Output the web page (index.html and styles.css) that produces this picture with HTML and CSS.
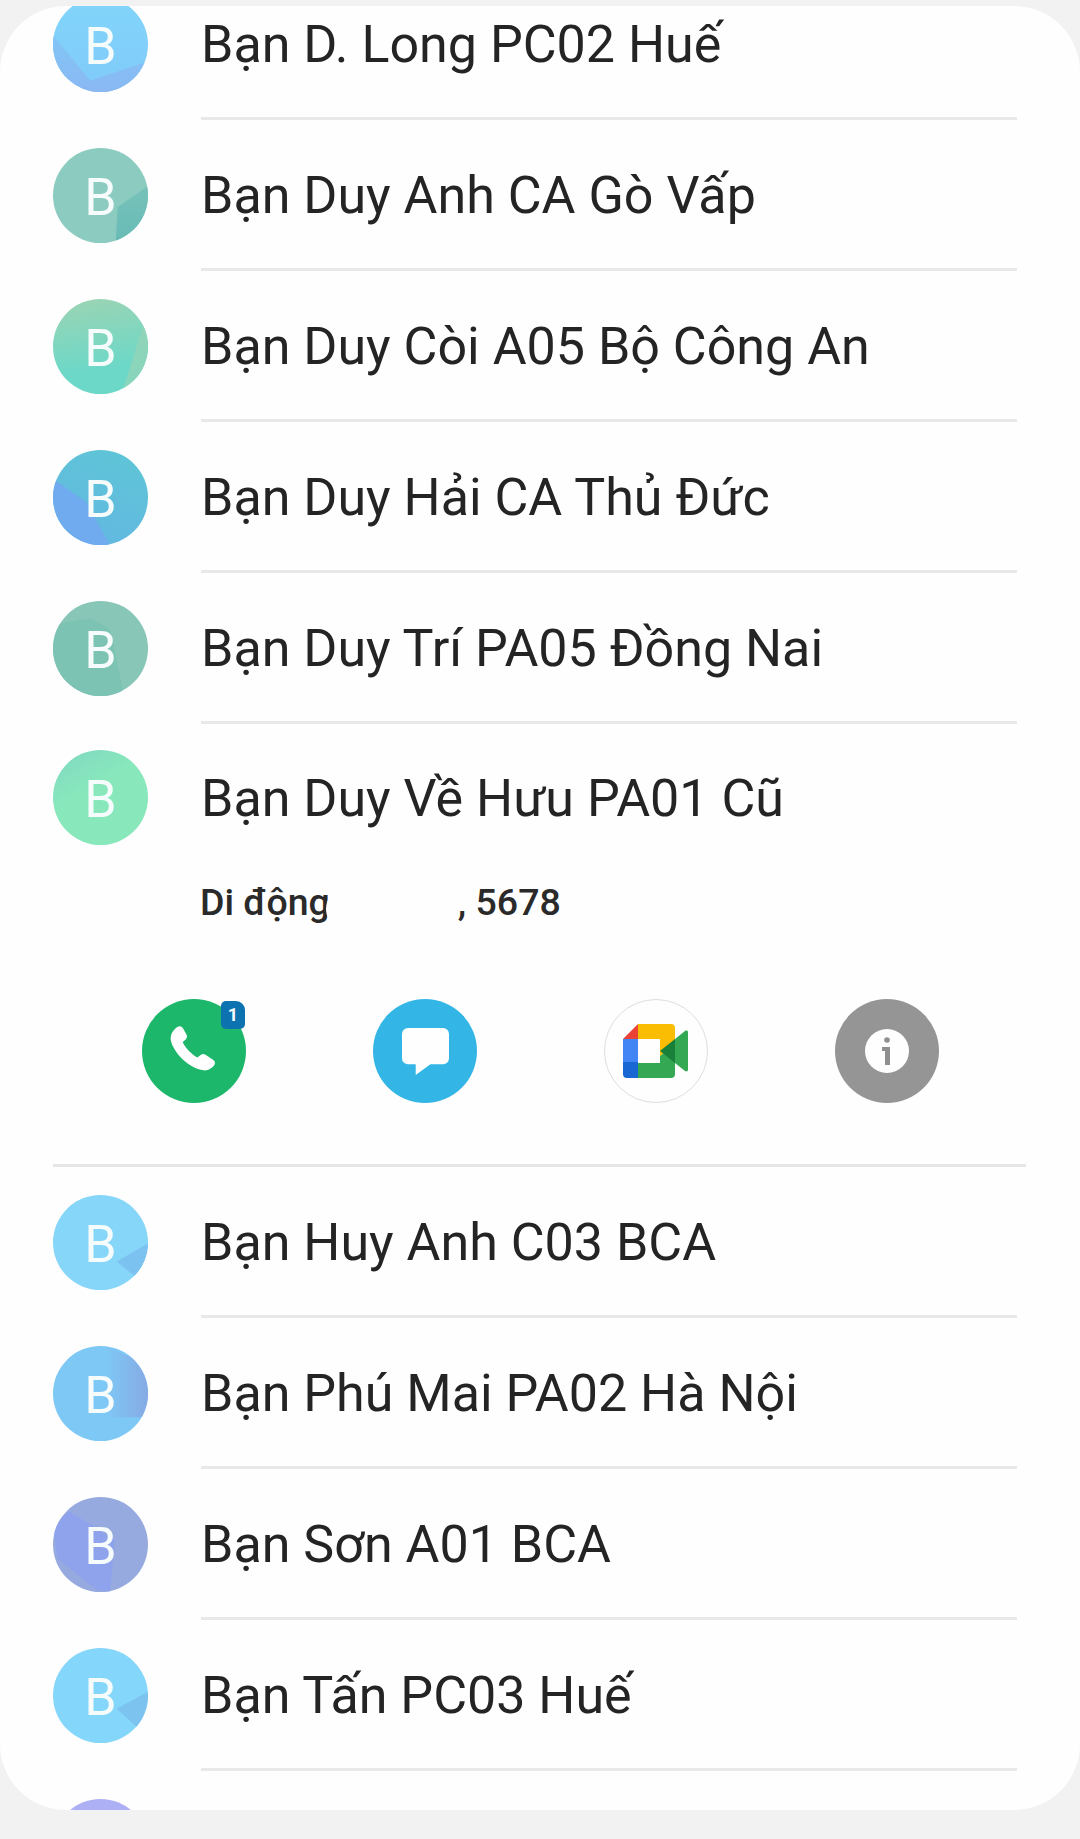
FILE: index.html
```html
<!DOCTYPE html>
<html lang="vi">
<head>
<meta charset="utf-8">
<title>Danh bạ</title>
<link rel="stylesheet" href="styles.css">
</head>
<body>
<main class="card">
  <ul class="list">
    <li class="row"><span class="avatar a-sky">B</span><span class="name">Bạn D. Long PC02 Huế</span></li>
    <li class="row"><span class="avatar a-teal">B</span><span class="name">Bạn Duy Anh CA Gò Vấp</span></li>
    <li class="row"><span class="avatar a-mint">B</span><span class="name">Bạn Duy Còi A05 Bộ Công An</span></li>
    <li class="row"><span class="avatar a-blue">B</span><span class="name">Bạn Duy Hải CA Thủ Đức</span></li>
    <li class="row"><span class="avatar a-teal2">B</span><span class="name">Bạn Duy Trí PA05 Đồng Nai</span></li>
  </ul>
  <section class="expanded">
    <div class="row open"><span class="avatar a-green">B</span><span class="name">Bạn Duy Về Hưu PA01 Cũ</span></div>
    <p class="phone"><span>Di động</span><span class="smudge"></span><span class="tail">, 5678</span></p>
    <div class="actions">
      <button class="action call">
        <svg viewBox="0 0 48 48" width="54" height="54"><path fill="#fefefe" d="M9.200 2.600c1.900-1.100 4-.5 5.100 1.300l3 5.400c.9 1.500.6 3.200-.7 4.400l-2.600 2.200c1.500 4.200 7.800 11.300 13 13.800l2.900-2.200c1.300-1 3-1 4.300-.1l7 4.600c1.600 1.100 1.900 3.200.7 4.700-2 2.600-5.500 5-9.400 4.500C19.500 39.500 5.500 25.500 3.400 14.200 2.600 9.300 6 4.600 9.200 2.600z"/></svg>
        <span class="badge">1</span>
      </button>
      <button class="action msg">
        <svg viewBox="0 0 48 48" width="47" height="47"><path fill="#fefefe" d="M6 0h36a6 6 0 0 1 6 6v25a6 6 0 0 1-6 6H29L14 48V37H6a6 6 0 0 1-6-6V6a6 6 0 0 1 6-6z"/></svg>
      </button>
      <button class="action meet">
        <svg viewBox="0 0 66 54" width="66" height="54">
          <path fill="#ea4335" d="M15 0 0 15h15z"/>
          <path fill="#4285f4" d="M0 15h15v23H0z"/>
          <path fill="#1967d2" d="M0 38h15v16H4a4 4 0 0 1-4-4z"/>
          <path fill="#fbbc04" d="M15 0h33a4 4 0 0 1 4 4v17L37 32V15H15z"/>
          <path fill="#34a853" d="M15 39h22v-7l15-11v29a4 4 0 0 1-4 4H15z"/>
          <path fill="#188038" d="m37 27 15-12v24z"/>
          <path fill="#34a853" d="M52 15 62 7c1.500-1 3-.5 3 1.500v37c0 2-1.500 2.500-3 1.500L52 39z"/>
        </svg>
      </button>
      <button class="action info">
        <svg viewBox="0 0 44 44" width="44" height="44"><circle cx="22" cy="22" r="22" fill="#fefefe"/><circle cx="22" cy="11" r="2.800" fill="#8f8f8f"/><path fill="#8f8f8f" d="M17 18h8v18h-5V22h-3z"/></svg>
      </button>
    </div>
  </section>
  <ul class="list">
    <li class="row"><span class="avatar a-sky2">B</span><span class="name">Bạn Huy Anh C03 BCA</span></li>
    <li class="row"><span class="avatar a-blue2">B</span><span class="name">Bạn Phú Mai PA02 Hà Nội</span></li>
    <li class="row"><span class="avatar a-violet">B</span><span class="name">Bạn Sơn A01 BCA</span></li>
    <li class="row"><span class="avatar a-sky3">B</span><span class="name">Bạn Tấn PC03 Huế</span></li>
    <li class="row"><span class="avatar a-lilac"></span></li>
  </ul>
</main>
</body>
</html>
```
FILE: styles.css
```css
* { box-sizing: border-box; }
html, body { margin: 0; padding: 0; }
body {
  width: 1080px;
  height: 1839px;
  background: #f2f2f2;
  font-family: Roboto, "Noto Sans", sans-serif;
  color: #242424;
  padding-top: 6px;
  overflow: hidden;
}
.card {
  height: 1804px;
  background: #fefefe;
  border-radius: 66px;
  overflow: hidden;
}
.list { list-style: none; margin: 0; padding: 0; }
.list:first-child { margin-top: -37px; }
.row {
  position: relative;
  display: flex;
  align-items: center;
  height: 151px;
  padding-left: 53px;
  gap: 53px;
}
.row::after {
  content: "";
  position: absolute;
  left: 201px;
  right: 63px;
  bottom: 0;
  height: 3px;
  background: #e8e8e8;
}
.row.open::after { display: none; }
.avatar {
  position: relative;
  isolation: isolate;
  flex: none;
  width: 95px;
  height: 95px;
  padding-top: 4px;
  border-radius: 50%;
  overflow: hidden;
  display: flex;
  align-items: center;
  justify-content: center;
  color: #f6fcfc;
  font-size: 52px;
  font-weight: 400;
  line-height: 1;
}
.avatar::before {
  content: "";
  position: absolute;
  inset: 0;
  z-index: -1;
}
.name {
  font-size: 52px;
  line-height: 1;
  white-space: nowrap;
}
.open .name { padding-top: 3px; }
.a-sky { background: linear-gradient(#82d5fb, #80caf9); }
.a-sky::before { background: linear-gradient(#80c8f8 30%, #8ab8f2); clip-path: polygon(0 40%, 39% 88%, 100% 68%, 100% 100%, 0 100%); }
.a-teal { background: #8ccbbf; }
.a-teal::before { background: linear-gradient(#80c7bc, #68bbb6); clip-path: polygon(100% 40%, 68% 62%, 66% 100%, 100% 100%); }
.a-mint { background: linear-gradient(172deg, #9cd4b3, #6cd8c8 72%); }
.a-mint::before { background: linear-gradient(#96d5b6, #85d5bd); clip-path: polygon(100% 12%, 72% 100%, 100% 100%); }
.a-blue { background: linear-gradient(200deg, #5fc6d6, #62b6e2); }
.a-blue::before { background: #6fabee; clip-path: polygon(0 30%, 35% 55%, 60% 100%, 0 100%); }
.a-teal2 { background: #88c6b7; }
.a-teal2::before { background: #7cc3b3; clip-path: polygon(0 25%, 40% 18%, 60% 30%, 75% 100%, 0 100%); }
.a-green { background: linear-gradient(150deg, #80d6c2, #88e8bc 40%); }
.a-sky2 { background: #86d6f9; }
.a-sky2::before { background: #7cc2f0; clip-path: polygon(67% 70%, 100% 51%, 100% 100%, 88% 87%); }
.a-blue2 { background: #7ec8f5; }
.a-blue2::before { background: linear-gradient(90deg, #7ec8f5 55%, #86aae4); clip-path: polygon(55% 75%, 100% 75%, 100% 20%, 55% 0); }
.a-violet { background: #97aae0; }
.a-violet::before { background: #8fa3ec; clip-path: polygon(17% 15%, 65% 45%, 60% 100%, 45% 97%, 5% 65%, 0 30%); }
.a-sky3 { background: #84d6fa; }
.a-sky3::before { background: #7cc3f0; clip-path: polygon(67% 64%, 100% 46%, 100% 100%, 88% 83%); }
.a-lilac { background: #aeb0f5; }

.expanded { height: 443px; position: relative; }
.expanded::after {
  content: "";
  position: absolute;
  left: 53px;
  right: 54px;
  bottom: 0;
  height: 3px;
  background: #e6e6e6;
}
.row.open { height: 147px; }
.phone {
  position: relative;
  margin: 9px 0 0;
  padding-left: 200px;
  height: 46px;
  display: flex;
  align-items: center;
  font-size: 37.5px;
  font-weight: 500;
  line-height: 1;
  color: #2a2a2a;
}
.phone::after {
  content: "";
  position: absolute;
  left: 326px;
  top: -6px;
  width: 110px;
  height: 70px;
  border-radius: 50%;
  background: #fefefe;
}
.smudge { width: 128px; }
.actions {
  display: grid;
  grid-template-columns: repeat(4, 104px);
  column-gap: 127px;
  padding-left: 142px;
  margin-top: 73px;
}
.action {
  position: relative;
  width: 104px;
  height: 104px;
  padding: 0;
  border: 0;
  border-radius: 50%;
  display: flex;
  align-items: center;
  justify-content: center;
}
.call { background: #1cb76b; }
.msg { background: #33b6e6; }
.meet { background: #fefefe; border: 1.5px solid #dedede; }
.info { background: #959595; }
.badge {
  position: absolute;
  top: 2px;
  right: 1px;
  width: 24px;
  height: 28px;
  border-radius: 5px 9px 5px 5px;
  background: #0d72b0;
  color: #f6fbfd;
  font: 700 18px/28px Roboto, sans-serif;
  text-align: center;
}
```
